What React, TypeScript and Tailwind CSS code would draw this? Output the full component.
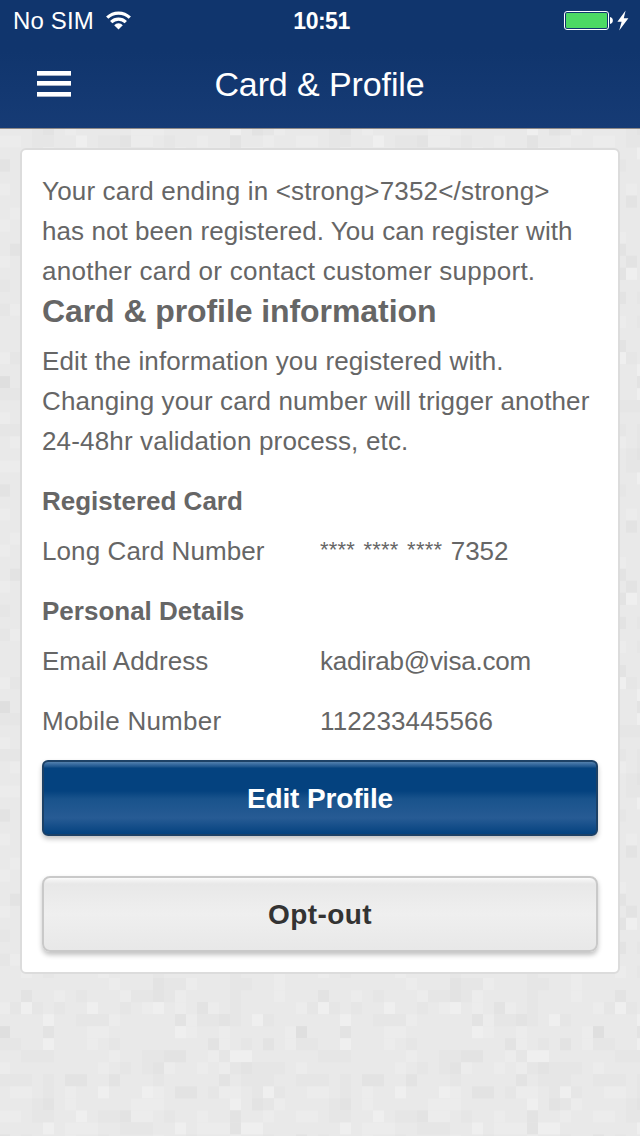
import React from "react";

const SHADES: Record<string, string> = {
  L: "#efefef",
  l: "#ececec",
  d: "#e6e6e6",
  D: "#e3e3e3",
  X: "#dfdfdf",
};

// One repeat of the paper mosaic: 27 x 27 cells.
const MOSAIC = [
  "..........l...Dddl...dd..l.",
  "..D..l.d...lddDdl....d...l.",
  "ldLd.d..L..d.lL.l.Dl.d.....",
  "....L..dddl.....DlddDd.Ld..",
  "X...D...ll......Ll..l.....l",
  "dd..L...l.d........Dl.d.D.l",
  "..ddd.....l..ddDD..ldLL....",
  "l........l.d.dDl..l.ldDddd.",
  "ddd.d.DD..D...d.....D.ddd..",
  ".ll.d.l..L...Ll.DD.dll.dLd.",
  "...dD.l.....lll......L.Ddl.",
  "ll.dd..L.ddDll.d..l..D..l..",
  "....L.lll..ddd..L.lllDLL...",
  "D.d...l..d....l..d...l..d..",
  ".....d....l..d.....l...d...",
  "l..l....d...L....d....l....",
  "...D..l....d....l...d....l.",
  ".l...d....l....D...l....d..",
  "l......d.....l...d....L....",
  "..l..d....D.....l....d...l.",
  ".DD....l.....d....l....D...",
  "l..D.l....d....l.....d...l.",
  "..DL....d....l....D....l...",
  "d.....l....d....l....d.....",
  "..D.d....l....d....l....D..",
  "dl.....d....l....d....l....",
  "..l.d....l....d......d...l.",
];
const CELL_W = 11;
const CELL_H = 325 / 27;

function Texture() {
  const cells: React.ReactNode[] = [];
  MOSAIC.forEach((row, r) =>
    row.split("").forEach((k, c) => {
      if (SHADES[k])
        cells.push(
          <rect key={r + "-" + c} x={c * CELL_W} y={r * CELL_H} width={CELL_W} height={CELL_H} fill={SHADES[k]} />
        );
    })
  );
  return (
    <svg className="absolute inset-0" width={640} height={1007} aria-hidden="true">
      <defs>
        <pattern id="mosaic" x={-1} y={199} width={297} height={325} patternUnits="userSpaceOnUse">
          <rect width={297} height={325} fill="#e9e9e9" />
          {cells}
        </pattern>
      </defs>
      <rect width={640} height={1007} fill="url(#mosaic)" />
    </svg>
  );
}

function WifiIcon() {
  return (
    <svg className="mb-0.5 ml-3" width={25} height={19} viewBox="0 0 25 19" fill="none" stroke="#fff" strokeWidth={3.2}>
      <path d="M1.2 6.7 A16 16 0 0 1 23.8 6.7" />
      <path d="M5.2 11.1 A10.4 10.4 0 0 1 19.8 11.1" />
      <path d="M12.5 18.5 L8.2 14.2 A5.9 5.9 0 0 1 16.8 14.2 Z" fill="#fff" stroke="none" />
    </svg>
  );
}

function BatteryIcon() {
  return (
    <svg width={66} height={22} viewBox="0 0 66 22">
      <rect x={0.5} y={1.5} width={44} height={18} rx={2.5} fill="none" stroke="#fff" />
      <rect x={2} y={3} width={41} height={15} rx={1} fill="#4cd964" />
      <path d="M46 7 C49.8 7.4 49.8 13.6 46 14 Z" fill="#fff" />
      <path d="M61.6 0.5 L53.4 11.8 H57.6 L55.2 20.4 L64.4 8.2 H59.8 Z" fill="#fff" />
    </svg>
  );
}

function Row({ label, children, labelClass = "" }: { label: string; children: React.ReactNode; labelClass?: string }) {
  return (
    <div className="flex h-10">
      <span className={"w-[278px] " + labelClass}>{label}</span>
      <span>{children}</span>
    </div>
  );
}

export default function App() {
  return (
    <div className="flex h-[1136px] w-[640px] flex-col overflow-hidden bg-[#e9e9e9] font-['Liberation_Sans',sans-serif] text-[26px] leading-10 text-[#666666]">
      <header className="flex h-[129px] flex-col border-b border-[#8f8a88] bg-linear-to-b from-[#10356d] from-40% to-[#163b75] text-white">
        <div className="flex h-10 items-center pl-[13px] pr-[10px] pt-0.5 text-[24px]">
          <div className="flex flex-1 items-center">
            <span className="tracking-[0.15px]">No SIM</span>
            <WifiIcon />
          </div>
          <span className="text-[23px] font-bold tracking-[-0.5px]">10:51</span>
          <div className="flex flex-1 justify-end">
            <BatteryIcon />
          </div>
        </div>
        <div className="flex h-[87px] items-center px-[37px]">
          <button className="flex w-[34px] flex-col gap-[5px]" aria-label="Menu">
            <span className="h-[5px] border-b border-[#a9b4c6] bg-white" />
            <span className="h-[5px] border-b border-[#a9b4c6] bg-white" />
            <span className="mt-px h-[5px] border-b border-[#a9b4c6] bg-white" />
          </button>
          <h1 className="flex-1 pr-[35px] text-center text-[34px] tracking-[-0.1px]">Card &amp; Profile</h1>
        </div>
      </header>
      <main className="relative flex-1 px-5 pt-[19px]">
        <Texture />
        <section className="relative h-[826px] rounded-md border-2 border-[#dcdcdc] bg-white px-5 pt-[21px]">
          <p>
            <span className="tracking-[0.17px]">Your card ending in &lt;strong&gt;7352&lt;/strong&gt;</span>
            <br />
            <span className="tracking-[0.065px]">has not been registered. You can register with</span>
            <br />
            <span className="tracking-[0.26px]">another card or contact customer support.</span>
          </p>
          <h2 className="text-[32px] font-bold tracking-[-0.08px]">Card &amp; profile information</h2>
          <p className="pt-2.5 tracking-[0.12px]">
            Edit the information you registered with.
            <br />
            Changing your card number will trigger another
            <br />
            <span className="tracking-[0.16px]">24-48hr validation process, etc.</span>
          </p>
          <h3 className="mt-5 font-bold">Registered Card</h3>
          <div className="mt-2.5">
            <Row label="Long Card Number" labelClass="tracking-[0.09px]">
              <span className="align-[3px] text-[22px] leading-none tracking-[0.2px] [word-spacing:2.2px]">**** **** **** </span>
              7352
            </Row>
          </div>
          <h3 className="mt-5 font-bold">Personal Details</h3>
          <div className="mt-2.5 flex flex-col gap-5">
            <Row label="Email Address">
              <span className="tracking-[-0.2px]">kadirab@visa.com</span>
            </Row>
            <Row label="Mobile Number" labelClass="tracking-[0.23px]">
              <span className="tracking-[0.13px]">112233445566</span>
            </Row>
          </div>
          <button className="mt-[19px] flex h-19 w-full items-center justify-center rounded-md border-2 border-[#1d4166] bg-[linear-gradient(#5480ad_0px,#2f649a_3px,#1a5289_5px,#04427f_6px,#04427f_29px,#19538c_37px,#275b94_56px,#04427f_72px)] pt-0.5 text-[28px] font-bold tracking-[-0.15px] text-white shadow-[0_3px_5px_rgba(0,0,0,0.24)]">
            Edit Profile
          </button>
          <button className="mt-10 flex h-19 w-full items-center justify-center rounded-lg border-2 border-[#c9c9c9] bg-[linear-gradient(#fbfbfb_0px,#f0f0f0_3px,#e8e8e8_6px,#efefef_36px,#e8e8e8_72px)] pt-0.5 text-[28px] font-bold tracking-[0.4px] text-[#333333] shadow-[0_3px_5px_rgba(0,0,0,0.24)]">
            Opt-out
          </button>
        </section>
      </main>
    </div>
  );
}
